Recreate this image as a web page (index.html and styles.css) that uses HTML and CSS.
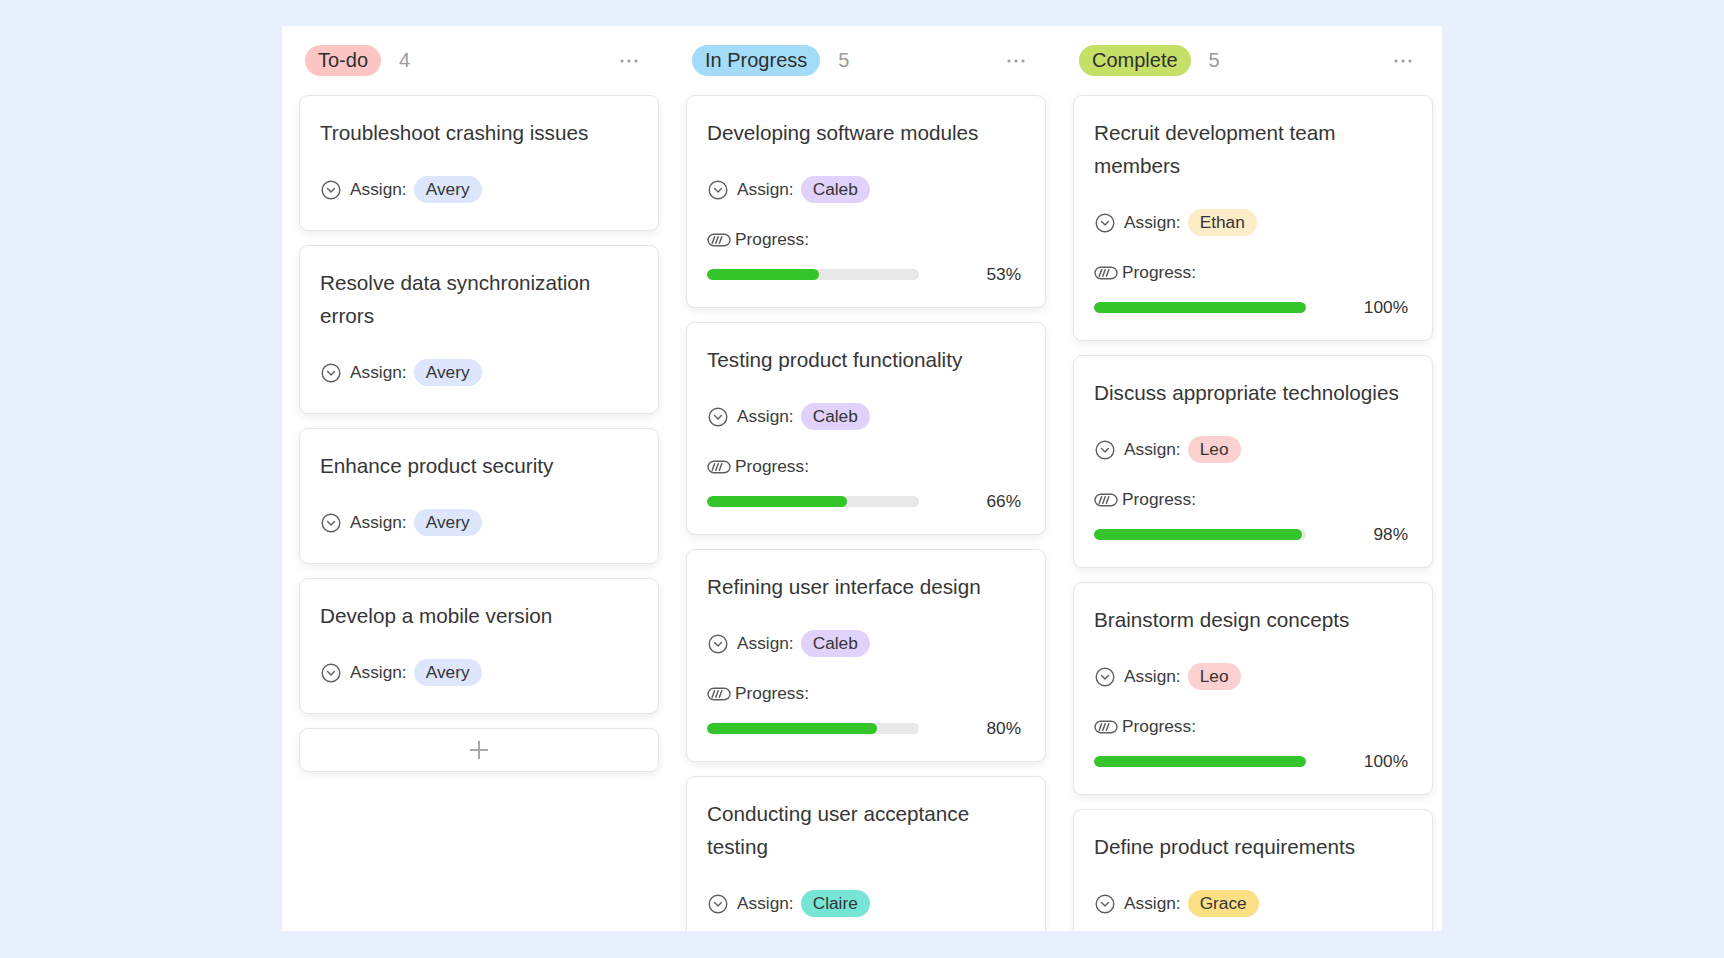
FILE: index.html
```html
<!DOCTYPE html>
<html lang="en">
<head>
<meta charset="utf-8">
<title>Task board</title>
<link rel="stylesheet" href="styles.css">
</head>
<body>
<svg width="0" height="0" class="defs" aria-hidden="true">
  <defs>
    <symbol id="i-assign" viewBox="0 0 20 20">
      <circle cx="10" cy="10" r="8.8" fill="none" stroke="#5f5f5f" stroke-width="1.4"/>
      <path d="M6.6 8.6 L10 11.9 L13.4 8.6" fill="none" stroke="#5f5f5f" stroke-width="1.4" stroke-linecap="round" stroke-linejoin="round"/>
    </symbol>
    <symbol id="i-progress" viewBox="0 0 24 14">
      <rect x="1" y="1.2" width="22" height="11.6" rx="5.8" fill="none" stroke="#5f5f5f" stroke-width="1.4"/>
      <path d="M5.2 10.2 L7.6 3.8 M8.8 10.2 L11.2 3.8 M12.4 10.2 L14.8 3.8" fill="none" stroke="#5f5f5f" stroke-width="1.5" stroke-linecap="round"/>
    </symbol>
    <symbol id="i-more" viewBox="0 0 18 4">
      <circle cx="2" cy="2" r="1.5" fill="#9a9a9a"/>
      <circle cx="9" cy="2" r="1.5" fill="#9a9a9a"/>
      <circle cx="16" cy="2" r="1.5" fill="#9a9a9a"/>
    </symbol>
  </defs>
</svg>

<main class="board">
  <!-- To-do -->
  <section class="column">
    <header class="col-head">
      <span class="status status--todo">To-do</span>
      <span class="count">4</span>
      <svg class="more"><use href="#i-more"/></svg>
    </header>
    <div class="cards">
      <article class="card">
        <h3 class="title">Troubleshoot crashing issues</h3>
        <div class="meta">
          <div class="row"><svg class="icon icon--assign"><use href="#i-assign"/></svg><span class="label">Assign:</span><span class="person person--avery">Avery</span></div>
        </div>
      </article>
      <article class="card">
        <h3 class="title">Resolve data synchronization errors</h3>
        <div class="meta">
          <div class="row"><svg class="icon icon--assign"><use href="#i-assign"/></svg><span class="label">Assign:</span><span class="person person--avery">Avery</span></div>
        </div>
      </article>
      <article class="card">
        <h3 class="title">Enhance product security</h3>
        <div class="meta">
          <div class="row"><svg class="icon icon--assign"><use href="#i-assign"/></svg><span class="label">Assign:</span><span class="person person--avery">Avery</span></div>
        </div>
      </article>
      <article class="card">
        <h3 class="title">Develop a mobile version</h3>
        <div class="meta">
          <div class="row"><svg class="icon icon--assign"><use href="#i-assign"/></svg><span class="label">Assign:</span><span class="person person--avery">Avery</span></div>
        </div>
      </article>
      <button class="add" type="button" aria-label="Add task"><span class="plus"></span></button>
    </div>
  </section>

  <!-- In Progress -->
  <section class="column">
    <header class="col-head">
      <span class="status status--progress">In Progress</span>
      <span class="count">5</span>
      <svg class="more"><use href="#i-more"/></svg>
    </header>
    <div class="cards">
      <article class="card card--progress">
        <h3 class="title">Developing software modules</h3>
        <div class="meta">
          <div class="row"><svg class="icon icon--assign"><use href="#i-assign"/></svg><span class="label">Assign:</span><span class="person person--caleb">Caleb</span></div>
          <div class="row row--plabel"><svg class="icon icon--progress"><use href="#i-progress"/></svg><span class="label">Progress:</span></div>
          <div class="row row--bar"><div class="bar"><div class="fill" style="width:53%"></div></div><span class="pct">53%</span></div>
        </div>
      </article>
      <article class="card card--progress">
        <h3 class="title">Testing product functionality</h3>
        <div class="meta">
          <div class="row"><svg class="icon icon--assign"><use href="#i-assign"/></svg><span class="label">Assign:</span><span class="person person--caleb">Caleb</span></div>
          <div class="row row--plabel"><svg class="icon icon--progress"><use href="#i-progress"/></svg><span class="label">Progress:</span></div>
          <div class="row row--bar"><div class="bar"><div class="fill" style="width:66%"></div></div><span class="pct">66%</span></div>
        </div>
      </article>
      <article class="card card--progress">
        <h3 class="title">Refining user interface design</h3>
        <div class="meta">
          <div class="row"><svg class="icon icon--assign"><use href="#i-assign"/></svg><span class="label">Assign:</span><span class="person person--caleb">Caleb</span></div>
          <div class="row row--plabel"><svg class="icon icon--progress"><use href="#i-progress"/></svg><span class="label">Progress:</span></div>
          <div class="row row--bar"><div class="bar"><div class="fill" style="width:80%"></div></div><span class="pct">80%</span></div>
        </div>
      </article>
      <article class="card">
        <h3 class="title">Conducting user acceptance testing</h3>
        <div class="meta">
          <div class="row"><svg class="icon icon--assign"><use href="#i-assign"/></svg><span class="label">Assign:</span><span class="person person--claire">Claire</span></div>
        </div>
      </article>
    </div>
  </section>

  <!-- Complete -->
  <section class="column">
    <header class="col-head">
      <span class="status status--complete">Complete</span>
      <span class="count">5</span>
      <svg class="more"><use href="#i-more"/></svg>
    </header>
    <div class="cards">
      <article class="card card--progress">
        <h3 class="title">Recruit development team members</h3>
        <div class="meta">
          <div class="row"><svg class="icon icon--assign"><use href="#i-assign"/></svg><span class="label">Assign:</span><span class="person person--ethan">Ethan</span></div>
          <div class="row row--plabel"><svg class="icon icon--progress"><use href="#i-progress"/></svg><span class="label">Progress:</span></div>
          <div class="row row--bar"><div class="bar"><div class="fill" style="width:100%"></div></div><span class="pct">100%</span></div>
        </div>
      </article>
      <article class="card card--progress">
        <h3 class="title">Discuss appropriate technologies</h3>
        <div class="meta">
          <div class="row"><svg class="icon icon--assign"><use href="#i-assign"/></svg><span class="label">Assign:</span><span class="person person--leo">Leo</span></div>
          <div class="row row--plabel"><svg class="icon icon--progress"><use href="#i-progress"/></svg><span class="label">Progress:</span></div>
          <div class="row row--bar"><div class="bar"><div class="fill" style="width:98%"></div></div><span class="pct">98%</span></div>
        </div>
      </article>
      <article class="card card--progress">
        <h3 class="title">Brainstorm design concepts</h3>
        <div class="meta">
          <div class="row"><svg class="icon icon--assign"><use href="#i-assign"/></svg><span class="label">Assign:</span><span class="person person--leo">Leo</span></div>
          <div class="row row--plabel"><svg class="icon icon--progress"><use href="#i-progress"/></svg><span class="label">Progress:</span></div>
          <div class="row row--bar"><div class="bar"><div class="fill" style="width:100%"></div></div><span class="pct">100%</span></div>
        </div>
      </article>
      <article class="card">
        <h3 class="title">Define product requirements</h3>
        <div class="meta">
          <div class="row"><svg class="icon icon--assign"><use href="#i-assign"/></svg><span class="label">Assign:</span><span class="person person--grace">Grace</span></div>
        </div>
      </article>
    </div>
  </section>
</main>
</body>
</html>
```

FILE: styles.css
```css
* { box-sizing: border-box; }

html, body {
  margin: 0;
  padding: 0;
  height: 100%;
}

body {
  background: #e8effd;
  font-family: "Liberation Sans", Arial, sans-serif;
  color: #333;
  overflow: hidden;
}

.defs {
  position: absolute;
  width: 0;
  height: 0;
}

.board {
  width: 1160px;
  height: 905px;
  margin: 26px auto 0;
  background: #ffffff;
  padding: 19px 0 0 17px;
  display: flex;
  gap: 27px;
  overflow: hidden;
}

.column {
  width: 360px;
  flex: 0 0 360px;
  display: flex;
  flex-direction: column;
}

.col-head {
  height: 31px;
  margin-bottom: 19px;
  padding: 0 21px 0 6px;
  display: flex;
  align-items: center;
}

.status {
  height: 31px;
  line-height: 31px;
  padding: 0 13px;
  border-radius: 16px;
  font-size: 20px;
  color: #2f2f2f;
}
.status--todo { background: #fdc6c5; }
.status--progress { background: #a3dcf8; }
.status--complete { background: #c6df66; }

.count {
  margin-left: 18px;
  font-size: 20px;
  color: #9b9b9b;
}

.more {
  margin-left: auto;
  width: 18px;
  height: 4px;
}

.cards {
  display: flex;
  flex-direction: column;
  gap: 14px;
}

.card {
  background: #fff;
  border: 1px solid #e6e6e6;
  border-radius: 9px;
  box-shadow: 0 3px 8px rgba(0, 0, 0, 0.07);
  padding: 20px 24px 27px 20px;
}
.card--progress { padding-bottom: 19px; }

.title {
  margin: 0;
  font-weight: normal;
  font-size: 20.7px;
  line-height: 33px;
  color: #363636;
}

.meta {
  margin-top: 27px;
  display: flex;
  flex-direction: column;
}

.row {
  height: 27px;
  display: flex;
  align-items: center;
  font-size: 17.3px;
  color: #3c3c3c;
}

.row--plabel { margin-top: 23px; }
.row--bar { margin-top: 8px; }

.icon {
  flex: 0 0 auto;
}
.icon--assign {
  width: 20px;
  height: 20px;
  margin-left: 1px;
  margin-right: 9px;
}
.icon--progress {
  width: 24px;
  height: 14px;
  margin-left: 0;
  margin-right: 4px;
}

.label { white-space: nowrap; }

.person {
  margin-left: 7px;
  height: 27px;
  line-height: 27px;
  padding: 0 12px;
  border-radius: 14px;
  color: #353535;
}
.person--avery { background: #dde6fd; }
.person--caleb { background: #e1d2fb; }
.person--ethan { background: #fcecc8; }
.person--leo { background: #fcd0cf; }
.person--claire { background: #76e5d5; }
.person--grace { background: #fddf85; }

.bar {
  width: 212px;
  height: 11px;
  border-radius: 6px;
  background: #e8e8e8;
  overflow: hidden;
}

.fill {
  height: 100%;
  border-radius: 6px;
  background: #33c52a;
}

.pct {
  margin-left: auto;
  color: #333;
}

.add {
  height: 44px;
  width: 100%;
  background: #fff;
  border: 1px solid #e6e6e6;
  border-radius: 9px;
  box-shadow: 0 3px 8px rgba(0, 0, 0, 0.07);
  display: flex;
  align-items: center;
  justify-content: center;
  padding: 0;
  cursor: pointer;
}

.plus {
  position: relative;
  width: 18px;
  height: 18px;
}
.plus::before,
.plus::after {
  content: "";
  position: absolute;
  background: #a8a8a8;
}
.plus::before {
  left: 0;
  top: 8px;
  width: 18px;
  height: 2px;
}
.plus::after {
  left: 8px;
  top: 0;
  width: 2px;
  height: 18px;
}
```
